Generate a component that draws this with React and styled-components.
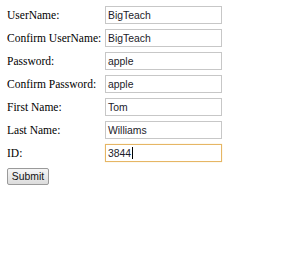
import React from "react";
import styled, { createGlobalStyle } from "styled-components";

const GlobalStyle = createGlobalStyle`
    html, body {
        margin: 0;
        padding: 0;
        background: #ffffff;
    }
`;

const fields = [
    { label: "UserName:", value: "BigTeach" },
    { label: "Confirm UserName:", value: "BigTeach" },
    { label: "Password:", value: "apple" },
    { label: "Confirm Password:", value: "apple" },
    { label: "First Name:", value: "Tom" },
    { label: "Last Name:", value: "Williams" },
    { label: "ID:", value: "3844", focused: true },
];

const App = () => {
    return (
        <>
            <GlobalStyle />
            <Form onSubmit={(e) => e.preventDefault()}>
                <Fields>
                    {fields.map((f) => (
                        <React.Fragment key={f.label}>
                            <Label>{f.label}</Label>
                            <Input $focused={f.focused}>
                                {f.value}
                                {f.focused && <Caret />}
                            </Input>
                        </React.Fragment>
                    ))}
                </Fields>
                <SubmitButton type="submit">Submit</SubmitButton>
            </Form>
        </>
    );
};

const Form = styled.form`
    padding: 6px 0 0 7px;
    display: flex;
    flex-direction: column;
    align-items: flex-start;
    gap: 6px;
`;

const Fields = styled.div`
    display: grid;
    grid-template-columns: 98px 117px;
    grid-auto-rows: 18px;
    row-gap: 5px;
    align-items: center;
`;

const Label = styled.span`
    font-family: "Liberation Serif", "Times New Roman", serif;
    font-size: 11.5px;
    color: #000;
    white-space: nowrap;
    line-height: 18px;
`;

const Input = styled.div`
    box-sizing: border-box;
    height: 18px;
    width: 117px;
    padding: 0 2px;
    display: flex;
    align-items: center;
    font-family: "Liberation Sans", Arial, sans-serif;
    font-size: 10.4px;
    color: #1c1c2a;
    background: #fff;
    border: 1px solid ${(p) => (p.$focused ? "#e6b665" : "#c7c7c7")};
    box-shadow: ${(p) => (p.$focused ? "0 0 1px #f3d9a8" : "none")};
`;

const Caret = styled.span`
    display: inline-block;
    width: 1px;
    height: 12px;
    background: #000;
    margin-left: 1px;
`;

const SubmitButton = styled.button`
    box-sizing: border-box;
    height: 17px;
    width: 42px;
    padding: 0;
    font-family: "Liberation Sans", Arial, sans-serif;
    font-size: 10.4px;
    color: #111;
    border: 1px solid #9a9a9a;
    border-radius: 2px;
    background: linear-gradient(#f6f6f6, #dcdcdc);
`;

export default App;
